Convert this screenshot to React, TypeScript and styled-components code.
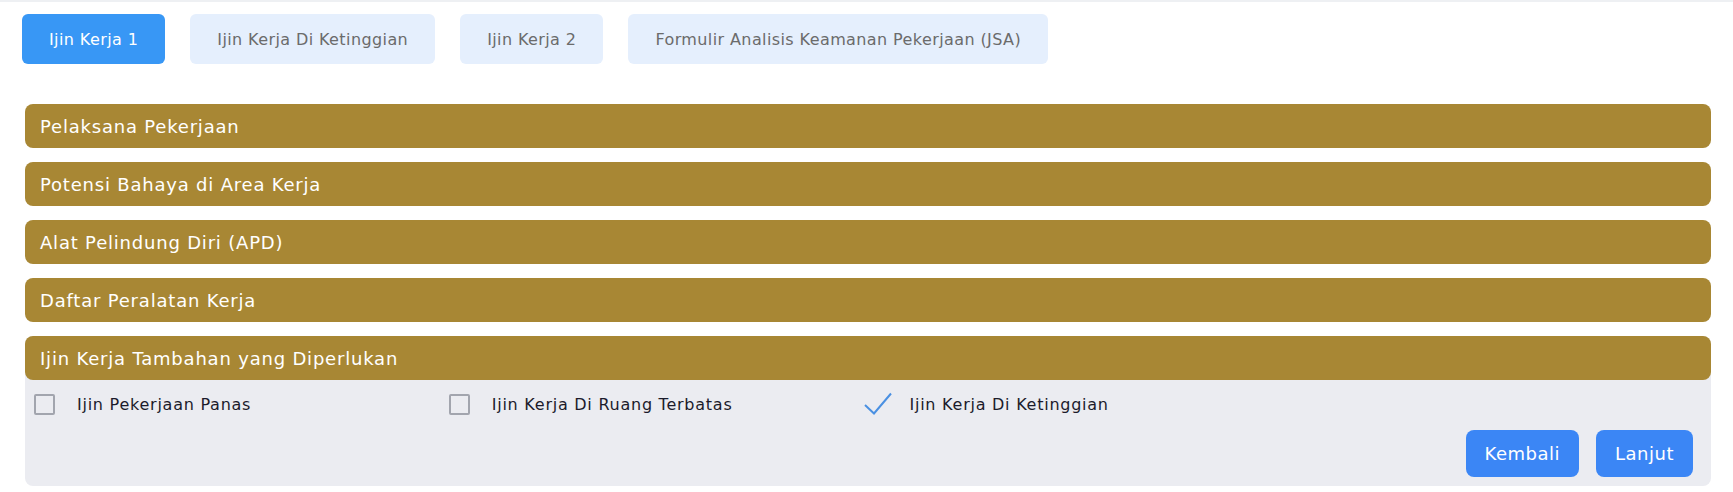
import React from "react";
import styled, { createGlobalStyle } from "styled-components";

const GlobalStyle = createGlobalStyle`
  html, body {
    margin: 0;
    padding: 0;
    background: #ffffff;
    font-family: "DejaVu Sans", "Noto Sans", sans-serif;
  }
`;

const Page = styled.div`
  border-top: 2px solid #eef0f3;
  padding: 12px 22px 8px 25px;
`;

const TabBar = styled.div`
  display: flex;
  gap: 25px;
  margin-left: -3px;
`;

const Tab = styled.button<{ $active?: boolean }>`
  height: 50px;
  padding: 0 27px;
  border: none;
  border-radius: 6px;
  font-family: inherit;
  font-size: 16px;
  letter-spacing: 0.4px;
  color: ${(p) => (p.$active ? "#ffffff" : "#6b6b6b")};
  background: ${(p) => (p.$active ? "#3897f5" : "#e5effd")};
  cursor: pointer;
`;

const Sections = styled.div`
  display: flex;
  flex-direction: column;
  gap: 14px;
  margin-top: 40px;
`;

const Section = styled.div<{ $open?: boolean }>`
  background: ${(p) => (p.$open ? "#ebecf1" : "transparent")};
  border-radius: 8px;
`;

const Header = styled.div`
  height: 44px;
  display: flex;
  align-items: center;
  padding: 0 15px;
  background: #a88734;
  color: #ffffff;
  font-size: 18px;
  letter-spacing: 0.8px;
  border-radius: 8px;
`;

const Body = styled.div`
  padding: 13px 18px 9px 9px;
`;

const OptionGrid = styled.div`
  display: grid;
  grid-template-columns: repeat(4, 1fr);
`;

const Option = styled.label`
  display: flex;
  align-items: center;
  gap: 22px;
  height: 22px;
  font-size: 16px;
  letter-spacing: 0.75px;
  color: #1b1b2b;
`;

const Box = styled.span`
  width: 17px;
  height: 17px;
  border: 2px solid #a2a5ae;
  border-radius: 2px;
  flex: none;
`;

const CheckIcon = styled.svg`
  width: 28px;
  height: 24px;
  flex: none;
  margin-right: -4px;
`;

const Actions = styled.div`
  display: flex;
  justify-content: flex-end;
  gap: 17px;
  margin-top: 15px;
`;

const ActionButton = styled.button`
  height: 47px;
  padding: 0 19px;
  border: none;
  border-radius: 8px;
  background: #3b86f5;
  color: #ffffff;
  font-family: inherit;
  font-size: 18px;
  letter-spacing: 0.5px;
  cursor: pointer;
`;

const tabs = [
  "Ijin Kerja 1",
  "Ijin Kerja Di Ketinggian",
  "Ijin Kerja 2",
  "Formulir Analisis Keamanan Pekerjaan (JSA)",
];

const sections = [
  "Pelaksana Pekerjaan",
  "Potensi Bahaya di Area Kerja",
  "Alat Pelindung Diri (APD)",
  "Daftar Peralatan Kerja",
];

const options = [
  { label: "Ijin Pekerjaan Panas", checked: false },
  { label: "Ijin Kerja Di Ruang Terbatas", checked: false },
  { label: "Ijin Kerja Di Ketinggian", checked: true },
];

export default function App() {
  return (
    <>
      <GlobalStyle />
      <Page>
        <TabBar>
          {tabs.map((t, i) => (
            <Tab key={t} $active={i === 0}>
              {t}
            </Tab>
          ))}
        </TabBar>
        <Sections>
          {sections.map((s) => (
            <Section key={s}>
              <Header>{s}</Header>
            </Section>
          ))}
          <Section $open>
            <Header>Ijin Kerja Tambahan yang Diperlukan</Header>
            <Body>
              <OptionGrid>
                {options.map((o) => (
                  <Option key={o.label}>
                    {o.checked ? (
                      <CheckIcon viewBox="0 0 28 24">
                        <path
                          d="M1 13 L10 21.5 L27 1.5"
                          fill="none"
                          stroke="#4a90e2"
                          strokeWidth="2"
                        />
                      </CheckIcon>
                    ) : (
                      <Box />
                    )}
                    {o.label}
                  </Option>
                ))}
              </OptionGrid>
              <Actions>
                <ActionButton>Kembali</ActionButton>
                <ActionButton>Lanjut</ActionButton>
              </Actions>
            </Body>
          </Section>
        </Sections>
      </Page>
    </>
  );
}
